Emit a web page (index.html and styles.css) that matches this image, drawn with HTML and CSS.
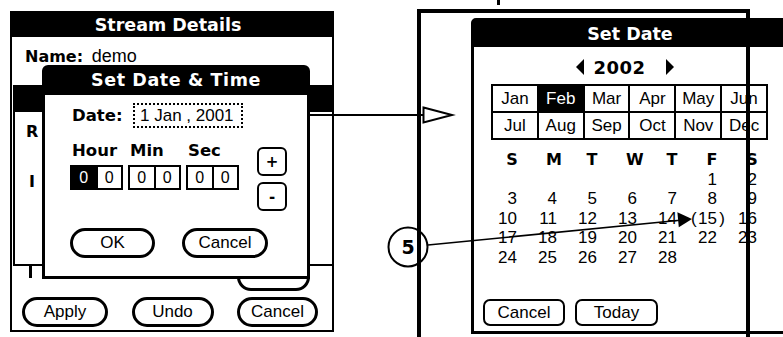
FILE: index.html
```html
<!DOCTYPE html>
<html>
<head>
    <title>Set Date &amp; Time</title>
    <meta charset="UTF-8">
    <link rel="stylesheet" href="styles.css">
</head>
<body>
    <div class="figure">
        <section class="device">
            <header class="title-bar">Stream Details</header>
            <div class="name-row"><b>Name:</b> <span class="name-value">demo</span></div>

            <!-- form that sits behind the dialog -->
            <div class="form-behind">
                <div class="form-behind-title"></div>
                <div class="form-behind-body">
                    <b class="label-r">R</b>
                    <b class="label-i">I</b>
                </div>
            </div>
            <span class="pill-hidden"></span>
            <span class="tick-hidden"></span>

            <div class="time-dialog">
                <header class="dialog-title">Set Date &amp; Time</header>
                <div class="dialog-body">
                    <div class="date-row">
                        <b class="field-label">Date:</b>
                        <span class="date-field">1 Jan , 2001</span>
                    </div>
                    <div class="time-row">
                        <div class="time-grid">
                            <b class="time-label">Hour</b>
                            <b class="time-label">Min</b>
                            <b class="time-label">Sec</b>
                            <div class="digit-pair"><span class="digit active">0</span><span class="digit">0</span></div>
                            <div class="digit-pair"><span class="digit">0</span><span class="digit">0</span></div>
                            <div class="digit-pair"><span class="digit">0</span><span class="digit">0</span></div>
                        </div>
                        <div class="stepper">
                            <button class="step step-up">+</button>
                            <button class="step step-down">-</button>
                        </div>
                    </div>
                    <div class="dialog-buttons">
                        <button class="pill pill-ok">OK</button>
                        <button class="pill pill-cancel">Cancel</button>
                    </div>
                </div>
            </div>

            <footer class="button-bar">
                <button class="pill btn-apply">Apply</button>
                <button class="pill btn-undo">Undo</button>
                <button class="pill btn-cancel">Cancel</button>
            </footer>
        </section>

        <section class="frame">
            <div class="date-dialog">
                <header class="dialog-title">Set Date</header>
                <div class="year-row">
                    <span class="tri tri-left"></span>
                    <b class="year">2002</b>
                    <span class="tri tri-right"></span>
                </div>
                <div class="months">
                    <span>Jan</span><span class="selected">Feb</span><span>Mar</span><span>Apr</span><span>May</span><span>Jun</span>
                    <span>Jul</span><span>Aug</span><span>Sep</span><span>Oct</span><span>Nov</span><span>Dec</span>
                </div>
                <div class="calendar">
                    <b class="wd"><i>S</i></b><b class="wd"><i>M</i></b><b class="wd"><i>T</i></b><b class="wd"><i>W</i></b><b class="wd"><i>T</i></b><b class="wd"><i>F</i></b><b class="wd"><i>S</i></b>
                    <span></span><span></span><span></span><span></span><span></span><span>1</span><span>2</span>
                    <span>3</span><span>4</span><span>5</span><span>6</span><span>7</span><span>8</span><span>9</span>
                    <span>10</span><span>11</span><span>12</span><span>13</span><span>14</span><span><em class="today">15</em></span><span>16</span>
                    <span>17</span><span>18</span><span>19</span><span>20</span><span>21</span><span>22</span><span>23</span>
                    <span>24</span><span>25</span><span>26</span><span>27</span><span>28</span><span></span><span></span>
                </div>
                <div class="date-buttons">
                    <button class="rbtn">Cancel</button>
                    <button class="rbtn">Today</button>
                </div>
            </div>
        </section>
    </div>

    <svg class="callouts" width="783" height="337" viewBox="0 0 783 337">
        <rect x="497" y="0" width="3" height="5" fill="#000"/>
        <line x1="310" y1="115" x2="424" y2="115" stroke="#000" stroke-width="2"/>
        <polygon points="423.5,107.5 452,115 423.5,122.5" fill="#fff" stroke="#000" stroke-width="2"/>
        <circle cx="408" cy="247" r="19.5" fill="none" stroke="#000" stroke-width="2"/>
        <text x="408" y="254" text-anchor="middle" class="callout-num">5</text>
        <line x1="428" y1="245" x2="680" y2="220.2" stroke="#000" stroke-width="1.5"/>
        <polygon points="692,219 677.4,212.2 678.8,227.2" fill="#000"/>
    </svg>
</body>
</html>
```

FILE: styles.css
```css
* {
    box-sizing: border-box;
}
body {
    margin: 0;
    width: 783px;
    height: 337px;
    overflow: hidden;
    position: relative;
    background: #fff;
    color: #000;
    font-family: "Liberation Sans", Arial, sans-serif;
    font-size: 17px;
}
b {
    font-family: "DejaVu Sans", sans-serif;
    font-weight: bold;
}
button {
    font-family: "Liberation Sans", Arial, sans-serif;
    font-size: 17px;
    color: #000;
    background: #fff;
    padding: 0;
    cursor: pointer;
}
.figure {
    display: flex;
    align-items: flex-start;
}

/* left handheld screen */
.device {
    position: relative;
    flex-shrink: 0;
    margin: 11px 0 0 10px;
    width: 324px;
    height: 321px;
    border: 2px solid #000;
    display: flex;
    flex-direction: column;
}
.title-bar {
    height: 24px;
    padding: 1px 8px 0 0;
    line-height: 23px;
    background: #000;
    color: #fff;
    text-align: center;
    font-family: "DejaVu Sans", sans-serif;
    font-weight: bold;
    font-size: 17.5px;
}
.name-row {
    margin-top: 9px;
    padding-left: 13px;
    line-height: 20px;
}
.name-row b {
    font-size: 16px;
}
.name-value {
    margin-left: 4px;
    font-size: 18px;
}
.form-behind {
    position: absolute;
    left: 1px;
    top: 72px;
    right: -2px;
    height: 181px;
    border: 2px solid #000;
    background: #fff;
}
.form-behind-title {
    height: 25px;
    background: #000;
}
.form-behind-body {
    display: flex;
    flex-direction: column;
    align-items: flex-start;
    padding: 10px 0 0 11px;
    line-height: 20px;
    font-size: 16px;
}
.label-i {
    margin: 30px 0 0 3px;
}
.pill-hidden {
    position: absolute;
    left: 225px;
    top: 249px;
    width: 73px;
    height: 29px;
    border: 3px solid #000;
    border-radius: 14px;
}
.tick-hidden {
    position: absolute;
    left: 17px;
    top: 251px;
    width: 3px;
    height: 14px;
    background: #000;
}

/* Set Date & Time dialog */
.time-dialog {
    position: absolute;
    left: 30px;
    top: 52px;
    width: 268px;
    height: 214px;
    border: 3px solid #000;
    border-radius: 6px 6px 0 0;
    background: #fff;
    z-index: 1;
}
.dialog-title {
    height: 27px;
    line-height: 25px;
    background: #000;
    color: #fff;
    text-align: center;
    font-family: "DejaVu Sans", sans-serif;
    font-weight: bold;
    font-size: 17.5px;
}
.time-dialog .dialog-title {
    letter-spacing: 0.6px;
}
.dialog-body {
    padding-left: 25px;
}
.date-row {
    display: flex;
    align-items: center;
    margin-top: 8px;
    height: 25px;
}
.field-label {
    width: 63px;
    padding-left: 2px;
    font-size: 16.5px;
}
.date-field {
    width: 110px;
    height: 25px;
    border: 2px dotted #000;
    padding-left: 5px;
    line-height: 21px;
}
.time-row {
    display: flex;
    align-items: flex-start;
    margin-top: 13px;
}
.time-grid {
    display: grid;
    grid-template-columns: repeat(3, 53px);
    column-gap: 5px;
    row-gap: 4px;
}
.time-label {
    padding-left: 2px;
    line-height: 20px;
    font-size: 16.5px;
}
.digit-pair {
    display: flex;
    height: 25px;
    border: 2px solid #000;
}
.digit {
    flex: 1;
    text-align: center;
    line-height: 21px;
    font-size: 16px;
}
.digit + .digit {
    border-left: 2px solid #000;
}
.digit.active {
    background: #000;
    color: #fff;
}
.stepper {
    display: flex;
    flex-direction: column;
    gap: 6px;
    margin: 6px 0 0 18px;
}
.step {
    width: 30px;
    height: 29px;
    border: 2px solid #000;
    border-radius: 6px;
    font-family: "DejaVu Sans", sans-serif;
    font-weight: bold;
    font-size: 15px;
    line-height: 24px;
}
.dialog-buttons {
    display: flex;
    gap: 27px;
    margin-top: 17px;
}
.pill {
    height: 30px;
    border: 3px solid #000;
    border-radius: 15px;
}
.pill-ok {
    width: 85px;
}
.pill-cancel {
    width: 86px;
}
.button-bar {
    display: flex;
    justify-content: space-between;
    margin-top: auto;
    margin-bottom: 3px;
    padding: 0 14px 0 10px;
}
.btn-apply {
    width: 86px;
}
.btn-undo {
    width: 82px;
}
.btn-cancel {
    width: 81px;
}

/* right framed detail */
.frame {
    position: relative;
    flex-shrink: 0;
    margin: 9px 0 0 83px;
    width: 333px;
    height: 340px;
}
.frame::after {
    content: "";
    position: absolute;
    inset: 0;
    border: 4px solid #000;
    border-bottom: none;
    z-index: 2;
}
.date-dialog {
    position: relative;
    z-index: 1;
    margin: 9px 0 0 54px;
    width: 318px;
    height: 316px;
    border: 3px solid #000;
    border-radius: 5px 5px 0 0;
    background: #fff;
    display: flex;
    flex-direction: column;
    align-items: flex-start;
}
.date-dialog .dialog-title {
    align-self: stretch;
    height: 26px;
    line-height: 26px;
}
.year-row {
    align-self: stretch;
    display: flex;
    justify-content: center;
    align-items: center;
    height: 20px;
    margin-top: 10px;
    padding-right: 10px;
}
.year {
    margin: 0 20px 0 9px;
    font-size: 18px;
    letter-spacing: 0.5px;
}
.tri {
    width: 0;
    height: 0;
    border-top: 8px solid transparent;
    border-bottom: 8px solid transparent;
}
.tri-left {
    border-right: 8px solid #000;
}
.tri-right {
    border-left: 8px solid #000;
}
.months {
    display: grid;
    grid-template-columns: repeat(6, 1fr);
    width: 277px;
    margin: 7px 0 0 17px;
    border-top: 2px solid #000;
    border-left: 2px solid #000;
}
.months span {
    height: 27px;
    border-right: 2px solid #000;
    border-bottom: 2px solid #000;
    text-align: center;
    line-height: 25px;
}
.months .selected {
    background: #000;
    color: #fff;
}
.calendar {
    display: grid;
    grid-template-columns: repeat(7, 40px);
    grid-auto-rows: 19.5px;
    margin: 10px 0 0 4px;
    line-height: 19.5px;
    text-align: right;
}
.calendar .wd {
    height: 20px;
    line-height: 20px;
    font-size: 16px;
}
.calendar .wd i {
    display: inline-block;
    width: 12px;
    text-align: center;
    font-style: normal;
}
.calendar span {
    padding-right: 1px;
}
.today {
    position: relative;
    font-style: normal;
}
.today::before {
    content: "(";
    position: absolute;
    left: -7px;
}
.today::after {
    content: ")";
    position: absolute;
    right: -8px;
}
.date-buttons {
    display: flex;
    gap: 10px;
    margin: 32px 0 0 9px;
}
.rbtn {
    height: 27px;
    width: 82px;
    border: 2px solid #000;
    border-radius: 7px;
    line-height: 23px;
}
.rbtn + .rbtn {
    width: 83px;
}

/* callout lines */
.callouts {
    position: absolute;
    left: 0;
    top: 0;
    z-index: 5;
    pointer-events: none;
}
.callout-num {
    font-family: "DejaVu Sans", sans-serif;
    font-weight: bold;
    font-size: 19px;
}
```
